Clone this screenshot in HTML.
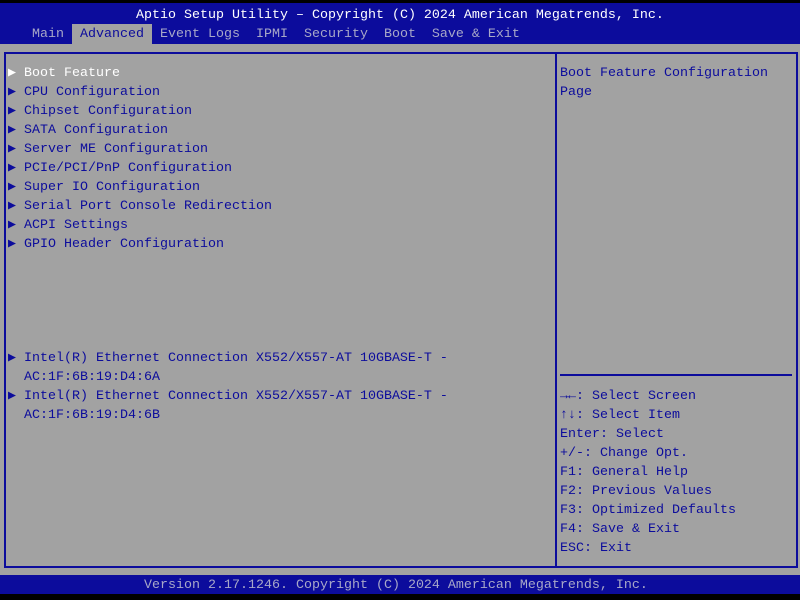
<!DOCTYPE html><html><head><style>
body{margin:0;width:800px;height:600px;background:#000;position:relative;overflow:hidden;font-family:"Liberation Mono",monospace;font-size:13.33px;}
div{position:absolute;white-space:pre;}
.t{line-height:19px;}
.b{color:#0c0c9c}
</style></head><body>
<div style="left:0;top:3px;width:800px;height:41px;background:#0c0c9c"></div>
<div class="t" style="left:136px;top:6px;color:#fff">Aptio Setup Utility – Copyright (C) 2024 American Megatrends, Inc.</div>
<div style="left:72px;top:24px;width:80px;height:20px;background:#a2a2a2"></div>
<div class="t" style="left:32px;top:25px;color:#a8a8c8">Main  <span style="color:#0c0c9c">Advanced</span>  Event Logs  IPMI  Security  Boot  Save &amp; Exit</div>
<div style="left:0;top:44px;width:800px;height:531px;background:#a2a2a2"></div>
<div style="left:4px;top:52px;width:790px;height:512px;border:2px solid #0c0c9c"></div>
<div style="left:555px;top:52px;width:2px;height:514px;background:#0c0c9c"></div>
<div style="left:560px;top:374px;width:232px;height:2px;background:#0c0c9c"></div>
<div class="t b" style="left:8px;top:64px"><span style="color:#fff">▶ Boot Feature</span>
▶ CPU Configuration
▶ Chipset Configuration
▶ SATA Configuration
▶ Server ME Configuration
▶ PCIe/PCI/PnP Configuration
▶ Super IO Configuration
▶ Serial Port Console Redirection
▶ ACPI Settings
▶ GPIO Header Configuration</div>
<div class="t b" style="left:8px;top:349px">▶ Intel(R) Ethernet Connection X552/X557-AT 10GBASE-T -
  AC:1F:6B:19:D4:6A
▶ Intel(R) Ethernet Connection X552/X557-AT 10GBASE-T -
  AC:1F:6B:19:D4:6B</div>
<div class="t b" style="left:560px;top:64px">Boot Feature Configuration
Page</div>
<div class="t b" style="left:560px;top:387px">→←: Select Screen
↑↓: Select Item
Enter: Select
+/-: Change Opt.
F1: General Help
F2: Previous Values
F3: Optimized Defaults
F4: Save &amp; Exit
ESC: Exit</div>
<div style="left:0;top:575px;width:800px;height:19px;background:#0c0c9c"></div>
<div class="t" style="left:144px;top:576px;color:#a8a8c8">Version 2.17.1246. Copyright (C) 2024 American Megatrends, Inc.</div>
</body></html>
